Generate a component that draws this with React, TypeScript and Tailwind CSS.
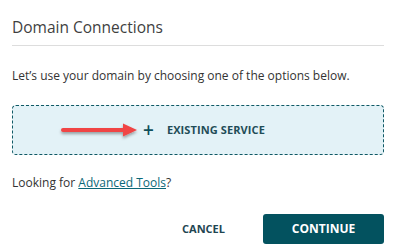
import React from 'react';

const Arrow = () => (
  <svg width="80" height="16" viewBox="0 0 80 16" className="overflow-visible">
    <defs>
      <filter id="sh" x="-10%" y="-50%" width="120%" height="250%">
        <feDropShadow dx="0" dy="2" stdDeviation="1.5" floodColor="#000" floodOpacity="0.35" />
      </filter>
    </defs>
    <g filter="url(#sh)">
      <rect x="0" y="6" width="64" height="4" rx="2" fill="#f04444" />
      <path d="M62 1.5 L76 8 L62 14.5 Z" fill="#f04444" />
    </g>
  </svg>
);

export default function App() {
  return (
    <div className="w-[396px] h-[251px] bg-white px-3 font-['Open_Sans',sans-serif] text-[#333]">
      <h2 className="pt-[17px] pb-[8px] text-[15.5px] leading-[20px] text-[#3f3f3f] border-b border-[#dddddd]">
        Domain Connections
      </h2>
      <p className="mt-[21px] text-[12px] leading-[18px] text-[#333]">
        Let’s use your domain by choosing one of the options below.
      </p>
      <div className="mt-[20px] h-[50px] rounded-[4px] border border-dashed border-[#0f5965] bg-[#e3f2f7] flex items-center pl-[48px]">
        <Arrow />
        <span className="ml-[2px] text-[#0f4f5a] text-[19px] leading-none font-semibold">+</span>
        <span className="ml-[13px] text-[11px] font-bold text-[#1f4d58] tracking-[0.1px]">EXISTING SERVICE</span>
      </div>
      <p className="mt-[19px] text-[12px] leading-[18px] text-[#333]">
        Looking for <a className="text-[#0b6878] underline">Advanced Tools</a>?
      </p>
      <div className="mt-[22px] flex justify-end items-center">
        <button className="text-[11px] font-bold text-[#1f4652] mr-[38px]">CANCEL</button>
        <button className="w-[121px] h-[30px] rounded-[3px] bg-[#03525f] text-white text-[12px] font-bold">CONTINUE</button>
      </div>
    </div>
  );
}
